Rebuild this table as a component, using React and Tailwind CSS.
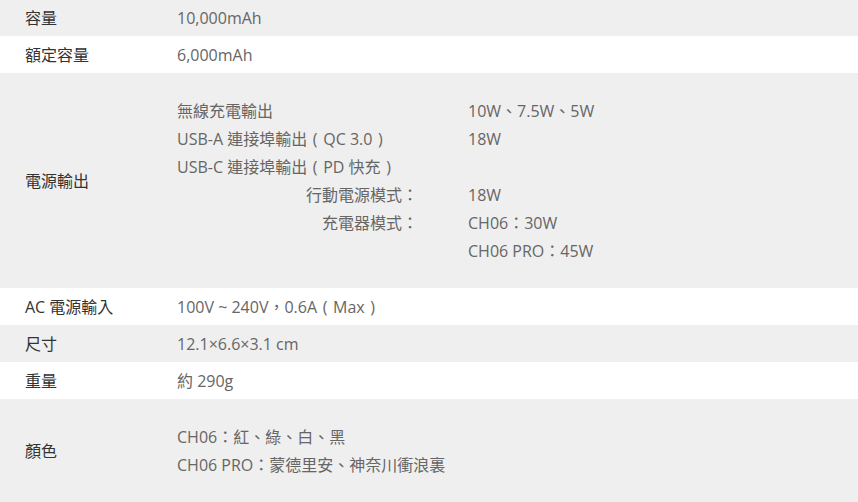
const font = { fontFamily: '"Open Sans", "Noto Sans CJK TC", sans-serif' };

function Row({ label, grey, children, h }) {
    return (
        <div className={`flex items-center ${h} ${grey ? 'bg-[#efefef]' : 'bg-white'}`}>
            <div className="w-[177px] pl-[25px] shrink-0 text-[#333]">{label}</div>
            <div className="flex-1 text-[#666]">{children}</div>
        </div>
    );
}

// full-width parens are centred in the reference font
const P = ({ c }) => <span className="inline-block w-[16px] text-center">{c}</span>;

export default function App() {
    const power = [
        ['無線充電輸出', '10W、7.5W、5W', false],
        [<>USB-A 連接埠輸出<P c="(" />QC 3.0<P c=")" /></>, '18W', false],
        [<>USB-C 連接埠輸出<P c="(" />PD 快充<P c=")" /></>, '', false],
        ['行動電源模式：', '18W', true],
        ['充電器模式：', 'CH06：30W', true],
        ['', 'CH06 PRO：45W', true],
    ];

    return (
        <div className="w-[858px] h-[502px] bg-white text-[16px] leading-[28px] overflow-hidden" style={font}>
            <Row label="容量" grey h="h-[36px]">10,000mAh</Row>
            <Row label="額定容量" h="h-[37px]">6,000mAh</Row>
            <Row label="電源輸出" grey h="h-[215px]">
                <div className="grid grid-cols-[241px_1fr] gap-x-[50px]">
                    {power.map(([l, v, right], i) => (
                        <div key={i} className="contents">
                            <div className={`whitespace-nowrap ${right ? 'text-right' : ''}`}>{l}</div>
                            <div className="whitespace-nowrap">{v}</div>
                        </div>
                    ))}
                </div>
            </Row>
            <Row label="AC 電源輸入" h="h-[37px]">100V ~ 240V，0.6A<P c="(" />Max<P c=")" /></Row>
            <Row label="尺寸" grey h="h-[37px]">12.1×6.6×3.1 cm</Row>
            <Row label="重量" h="h-[37px]">約 290g</Row>
            <Row label="顏色" grey h="h-[103px]">
                <div>CH06：紅、綠、白、黑</div>
                <div>CH06 PRO：蒙德里安、神奈川衝浪裏</div>
            </Row>
        </div>
    );
}
